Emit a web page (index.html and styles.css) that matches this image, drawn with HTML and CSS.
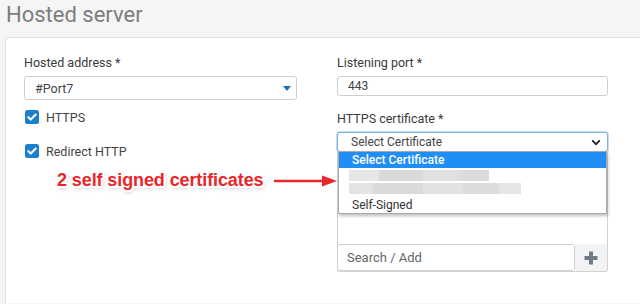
FILE: index.html
```html
<!DOCTYPE html>
<html lang="en">
<head>
  <meta charset="UTF-8">
  <title>Hosted server</title>
  <link rel="stylesheet" href="styles.css">
</head>
<body>
  <div class="page-header">
    <h1 class="page-title">Hosted server</h1>
  </div>

  <div class="panel">
    <div class="form-grid">
      <div class="col col-left">
        <div class="field">
          <div class="field-label">Hosted address *</div>
          <div class="select select-address">
            <span>#Port7</span>
            <svg class="caret" width="8" height="5" viewBox="0 0 8 5"><path d="M0 0h8L4 5z" fill="#1b6fc2"/></svg>
          </div>
        </div>

        <label class="check">
          <svg class="check-box" width="14" height="14" viewBox="0 0 14 14"><rect width="14" height="14" rx="2.5" fill="#1b7fcc"/><path d="M3.3 7.2l2.5 2.4 4.9-5" fill="none" stroke="#fff" stroke-width="2.1" stroke-linecap="round" stroke-linejoin="round"/></svg>
          HTTPS
        </label>
        <label class="check">
          <svg class="check-box" width="14" height="14" viewBox="0 0 14 14"><rect width="14" height="14" rx="2.5" fill="#1b7fcc"/><path d="M3.3 7.2l2.5 2.4 4.9-5" fill="none" stroke="#fff" stroke-width="2.1" stroke-linecap="round" stroke-linejoin="round"/></svg>
          Redirect HTTP
        </label>
      </div>

      <div class="col">
        <div class="field">
          <div class="field-label">Listening port *</div>
          <div class="input">443</div>
        </div>

        <div class="field">
          <div class="field-label">HTTPS certificate *</div>
          <div class="cert-wrap">
            <div class="select select-focus">
              <span>Select Certificate</span>
              <svg class="chevron" width="10" height="7" viewBox="0 0 10 7"><path d="M1.2 1.3L5 5.2l3.8-3.9" fill="none" stroke="#222" stroke-width="1.8"/></svg>
            </div>
            <div class="cert-box">
              <div class="search-row">
                <div class="search-input">Search / Add</div>
                <div class="add-btn">
                  <svg width="16" height="16" viewBox="0 0 16 16"><path d="M8 1.5v13M1.5 8h13" stroke="#6f7b86" stroke-width="4"/></svg>
                </div>
              </div>
            </div>

            <!-- lista desplegada sobre la caja -->
            <div class="dropdown">
              <div class="option option-active">Select Certificate</div>
              <div class="option-blur">
                <div class="blur-line">
                  <span style="width:30px;background:#e6e6e8"></span><span style="width:44px;background:#d9d9dc"></span><span style="width:36px;background:#e1e1e3"></span><span style="width:30px;background:#dcdcdf"></span>
                </div>
                <div class="blur-line">
                  <span style="width:24px;background:#e4e4e6"></span><span style="width:50px;background:#dadadd"></span><span style="width:40px;background:#e2e2e4"></span><span style="width:36px;background:#dcdcdf"></span><span style="width:22px;background:#e6e6e8"></span>
                </div>
              </div>
              <div class="option">Self-Signed</div>
            </div>
          </div>
        </div>
      </div>
    </div>

    <!-- anotación roja -->
    <div class="annotation">
      <span class="annotation-text">2 self signed certificates</span>
      <svg class="annotation-arrow" width="64" height="12" viewBox="0 0 64 12"><path d="M0 6h52" stroke="#e8262b" stroke-width="2.4"/><path d="M48 0.5L63 6 48 11.5z" fill="#e8262b"/></svg>
    </div>
  </div>
</body>
</html>
```

FILE: styles.css
```css
body {
  margin: 0;
  font-family: 'Roboto', 'Liberation Sans', sans-serif;
  background-color: #f5f5f5;
  color: #333;
  overflow: hidden;
}

.page-header {
  height: 37px;
  padding-left: 6px;
}

.page-title {
  margin: 0;
  padding-top: 1px;
  font-size: 22px;
  font-weight: 400;
  color: #7d7d7d;
  line-height: 28px;
}

.panel {
  position: relative;
  margin-left: 5px;
  margin-right: -10px;
  height: 248px;
  background-color: #fff;
  border: 1px solid #e0e0e0;
  border-bottom: none;
  border-radius: 4px 0 0 0;
  padding: 17px 0 0 18px;
}

.form-grid {
  display: grid;
  grid-template-columns: 273px 271px;
  column-gap: 40px;
}

.field {
  margin-bottom: 15px;
}

.col-left .field {
  margin-bottom: 10px;
}

.field-label {
  font-size: 12.5px;
  line-height: 16px;
  color: #3a3a3a;
  margin-bottom: 5px;
}

.select {
  display: flex;
  align-items: center;
  justify-content: space-between;
  box-sizing: border-box;
  border: 1px solid #cfcfcf;
  border-radius: 3px;
  font-size: 12px;
  color: #444;
  background: #fff;
}

.select-address {
  height: 24px;
  padding: 0 4px 0 10px;
  font-size: 12.5px;
}

.select-focus {
  height: 20px;
  padding: 0 6px 0 13px;
  border-color: #7fb4e0;
  box-shadow: 0 0 0 1px #c4ddf3;
}

.caret {
  margin-right: 1px;
}

.input {
  box-sizing: border-box;
  height: 20px;
  padding: 0 10px;
  border: 1px solid #cfcfcf;
  border-radius: 3px;
  font-size: 12px;
  line-height: 18px;
  color: #444;
}

.check {
  display: flex;
  align-items: center;
  gap: 7px;
  height: 14px;
  margin: 0 0 20px 1px;
  font-size: 12.5px;
  color: #444;
}

.cert-wrap {
  position: relative;
}

.cert-box {
  box-sizing: border-box;
  height: 120px;
  border: 1px solid #d2d2d2;
  border-top: none;
  border-radius: 0 0 3px 3px;
  display: flex;
  flex-direction: column;
  justify-content: flex-end;
}

.search-row {
  display: flex;
  height: 27px;
}

.search-input {
  flex: 1;
  box-sizing: border-box;
  border: 1px solid #cfcfcf;
  border-radius: 3px;
  margin: 0 0 0 -1px;
  padding-left: 9px;
  font-size: 13px;
  line-height: 25px;
  color: #666;
  background: #fff;
}

.add-btn {
  width: 32px;
  display: flex;
  align-items: center;
  justify-content: center;
  background: #f2f3f5;
  border-radius: 0 0 3px 0;
}

.dropdown {
  position: absolute;
  top: 19px;
  left: 1px;
  width: 269px;
  box-sizing: border-box;
  background: #fff;
  border: 1px solid #a9a9a9;
  box-shadow: 1px 2px 3px rgba(0, 0, 0, 0.25);
  font-size: 12px;
}

.option {
  height: 16px;
  line-height: 16px;
  padding-left: 13px;
  color: #333;
}

.option-active {
  background-color: #1f8ef5;
  color: #fff;
  font-weight: 500;
}

.option-blur {
  height: 29px;
  padding: 2px 0 0 10px;
  box-sizing: border-box;
}

.blur-line {
  display: flex;
  height: 11px;
  margin-bottom: 2px;
  filter: blur(0.6px);
}

.blur-line span {
  display: block;
  height: 100%;
}

.annotation {
  position: absolute;
  left: 51px;
  top: 132px;
  display: flex;
  align-items: center;
  gap: 10px;
}

.annotation-text {
  font-family: 'Liberation Sans', sans-serif;
  font-weight: bold;
  font-size: 18px;
  color: #e8262b;
  letter-spacing: -0.1px;
  text-shadow:
    -2px 0 #fff, 2px 0 #fff, 0 -2px #fff, 0 2px #fff,
    -1.5px -1.5px #fff, 1.5px 1.5px #fff, -1.5px 1.5px #fff, 1.5px -1.5px #fff,
    1px 2px 4px rgba(0, 0, 0, 0.35);
}

.annotation-arrow {
  display: block;
}
```
